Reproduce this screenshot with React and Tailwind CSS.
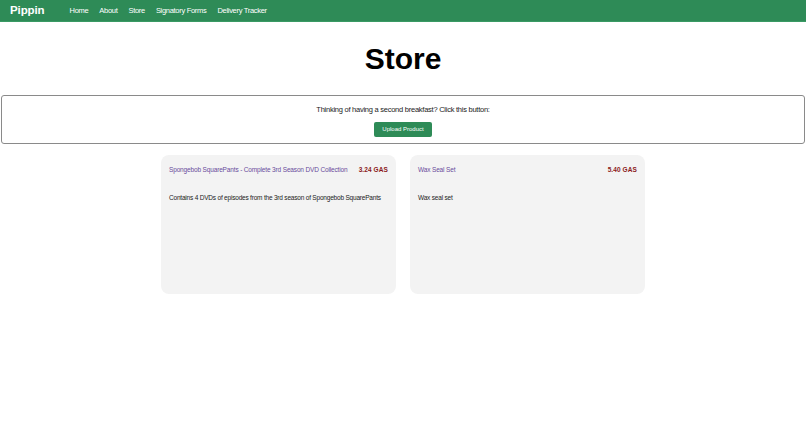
export default function App() {
  const products = [
    {
      name: 'Spongebob SquarePants - Complete 3rd Season DVD Collection',
      price: '3.24 GAS',
      desc: 'Contains 4 DVDs of episodes from the 3rd season of Spongebob SquarePants',
    },
    { name: 'Wax Seal Set', price: '5.40 GAS', desc: 'Wax seal set' },
  ];

  return (
    <div className="min-h-[423px] bg-white font-['Liberation_Sans',Arial,sans-serif] text-black">
      <nav className="h-[22px] bg-[#2e8b57] flex items-center px-[10px] border-b border-[#3a9a64]">
        <span className="text-white font-bold text-[11.5px] tracking-[-0.1px] mr-[25px]">Pippin</span>
        <div className="flex items-center gap-[11px] text-white text-[7.5px] tracking-[-0.3px]">
          <a>Home</a>
          <a>About</a>
          <a>Store</a>
          <a>Signatory Forms</a>
          <a>Delivery Tracker</a>
        </div>
      </nav>

      <h1 className="text-center font-bold text-[30px] leading-none mt-[22px] mb-[21px]">Store</h1>

      <div className="mx-[1px] border border-[#8a8a8a] rounded-[3px] flex flex-col items-center pt-[8px] pb-[6px]">
        <p className="text-[7.5px] tracking-[-0.25px] text-[#222]">Thinking of having a second breakfast? Click this button:</p>
        <button className="mt-[7px] h-[15px] px-[8px] bg-[#2e8b57] text-white text-[6px] rounded-[2px]">
          Upload Product
        </button>
      </div>

      <div className="flex justify-center gap-[14px] mt-[11px]">
        {products.map((p) => (
          <div key={p.name} className="w-[235px] h-[139px] bg-[#f3f3f3] rounded-[8px] px-[8px] pt-[10px]">
            <div className="flex justify-between items-start text-[6.5px] tracking-[-0.15px]">
              <span className="text-[#6a4c9c]">{p.name}</span>
              <span className="text-[#8b1a1a] font-bold tracking-[0.1px]">{p.price}</span>
            </div>
            <p className="mt-[18px] text-[6.5px] tracking-[-0.2px] text-[#222] whitespace-nowrap">{p.desc}</p>
          </div>
        ))}
      </div>
    </div>
  );
}
